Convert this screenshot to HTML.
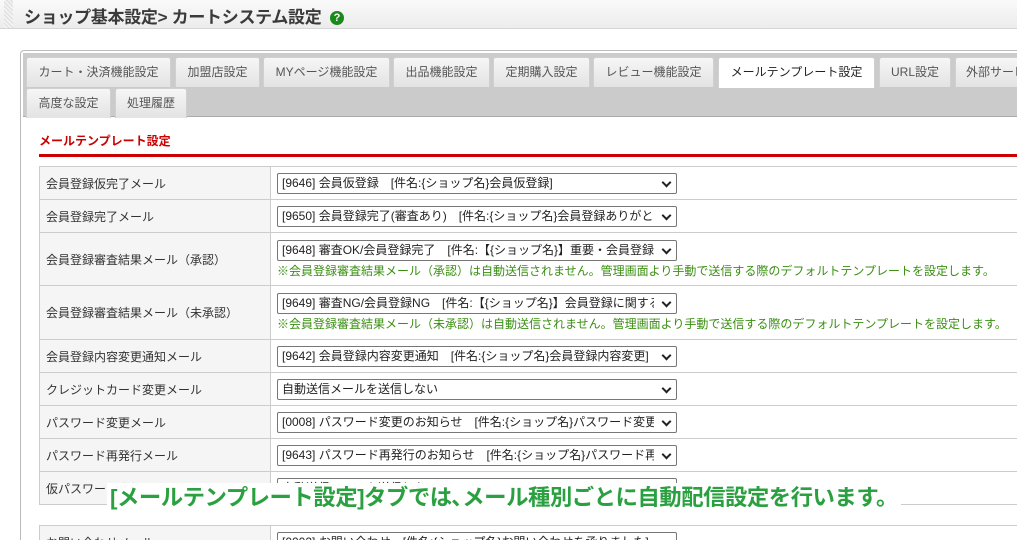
<!DOCTYPE html>
<html style="width:1017px;height:540px;overflow:hidden"><head><meta charset="utf-8"><style>
*{margin:0;padding:0;box-sizing:border-box}
body{width:1017px;height:540px;overflow:hidden;background:#fff;font-family:"Liberation Sans","Noto Sans CJK JP",sans-serif;color:#333}
.wrap{position:relative;width:1017px;height:540px;overflow:hidden}
.hd{position:absolute;left:0;top:0;width:1017px;height:29px;background:linear-gradient(#fafafa,#ececec);border-bottom:1px solid #d6d6d6}
.hatch{position:absolute;left:4px;top:0;width:9px;height:28px;background:repeating-linear-gradient(45deg,#ddd 0 1px,#f2f2f2 1px 3px)}
.ttl{position:absolute;left:24px;top:3px;font-size:17px;font-weight:bold;color:#3a3a3a;letter-spacing:-0.3px}
.q{display:inline-block;width:14px;height:14px;border-radius:50%;background:#1a8a1a;color:#fff;font-size:11px;line-height:14px;text-align:center;vertical-align:2px;margin-left:4px}
.panel{position:absolute;left:20px;top:50px;width:997px;height:490px;border:1px solid #bbb;border-right:none;border-bottom:none;border-radius:4px 0 0 0}
.tabs{position:absolute;left:23px;top:53px;width:994px;height:64px;background:#cbcbcb;border-bottom:1px solid #aaa}
.tab{position:absolute;height:30px;background:linear-gradient(#f6f6f6,#e3e3e3);border:1px solid #d0d0d0;border-bottom:none;border-radius:3px 3px 0 0;font-size:12px;color:#555;text-align:center;line-height:28px;white-space:nowrap;overflow:hidden}
.tab.a{background:#fff;color:#222;height:31px}
h2{position:absolute;left:39px;top:132px;font-size:12px;color:#c00;font-weight:bold}
.rl{position:absolute;left:39px;top:154px;width:978px;height:3px;background:#c00}
table{position:absolute;left:39px;border-collapse:collapse;width:990px;font-size:12px}
td{border:1px solid #ccc;vertical-align:middle}
td.l{width:231px;background:#f5f5f5;padding-left:6px;color:#333}
td.v{padding-left:6px}
.sel{width:400px;height:21px;border:1px solid #777;border-radius:2px;font-size:12px;line-height:19px;padding-left:4px;position:relative;white-space:nowrap;overflow:hidden;color:#222;background:#fff}
.sel:after{content:"";position:absolute;right:6px;top:5px;width:5px;height:5px;border-right:2px solid #222;border-bottom:2px solid #222;transform:rotate(45deg)}
.sel span{display:block;width:372px;overflow:hidden}
.n{color:#3a8f12;font-size:12px;margin-top:1px}
.clip{position:absolute;left:0;top:525px;width:1017px;height:15px;overflow:hidden}
.ov{position:absolute;left:107px;top:483px;font-size:22.4px;font-weight:bold;color:#2aa040;white-space:nowrap;letter-spacing:-0.5px;background:#fff;padding:0 3px;line-height:30px}
</style></head><body><div class="wrap">
<div class="hd"><div class="hatch"></div><div class="ttl">ショップ基本設定&gt; カートシステム設定 <span class="q">?</span></div></div>
<div class="panel"></div>
<div class="tabs"></div>
<div class="tab" style="left:26px;top:57px;width:145px">カート・決済機能設定</div>
<div class="tab" style="left:175px;top:57px;width:85px">加盟店設定</div>
<div class="tab" style="left:263px;top:57px;width:127px">MYページ機能設定</div>
<div class="tab" style="left:393px;top:57px;width:97px">出品機能設定</div>
<div class="tab" style="left:493px;top:57px;width:97px">定期購入設定</div>
<div class="tab" style="left:593px;top:57px;width:121px">レビュー機能設定</div>
<div class="tab a" style="left:718px;top:57px;width:157px">メールテンプレート設定</div>
<div class="tab" style="left:879px;top:57px;width:72px">URL設定</div>
<div class="tab" style="left:955px;top:57px;width:62px;text-align:left;padding-left:10px;border-right:none;border-radius:3px 0 0 0">外部サービス</div>
<div class="tab" style="left:26px;top:88px;width:85px">高度な設定</div>
<div class="tab" style="left:115px;top:88px;width:72px">処理履歴</div>
<h2>メールテンプレート設定</h2>
<div class="rl"></div>
<table style="top:166px">
<tr style="height:33px"><td class="l">会員登録仮完了メール</td><td class="v"><div class="sel"><span>[9646] 会員仮登録　[件名:{ショップ名}会員仮登録]</span></div></td></tr>
<tr style="height:33px"><td class="l">会員登録完了メール</td><td class="v"><div class="sel"><span>[9650] 会員登録完了(審査あり)　[件名:{ショップ名}会員登録ありがとうございます]</span></div></td></tr>
<tr style="height:53px"><td class="l">会員登録審査結果メール（承認）</td><td class="v"><div class="sel"><span>[9648] 審査OK/会員登録完了　[件名:【{ショップ名}】重要・会員登録</span></div><div class="n">※会員登録審査結果メール（承認）は自動送信されません。管理画面より手動で送信する際のデフォルトテンプレートを設定します。</div></td></tr>
<tr style="height:54px"><td class="l">会員登録審査結果メール（未承認）</td><td class="v"><div class="sel"><span>[9649] 審査NG/会員登録NG　[件名:【{ショップ名}】会員登録に関する</span></div><div class="n">※会員登録審査結果メール（未承認）は自動送信されません。管理画面より手動で送信する際のデフォルトテンプレートを設定します。</div></td></tr>
<tr style="height:33px"><td class="l">会員登録内容変更通知メール</td><td class="v"><div class="sel"><span>[9642] 会員登録内容変更通知　[件名:{ショップ名}会員登録内容変更]</span></div></td></tr>
<tr style="height:33px"><td class="l">クレジットカード変更メール</td><td class="v"><div class="sel"><span>自動送信メールを送信しない</span></div></td></tr>
<tr style="height:33px"><td class="l">パスワード変更メール</td><td class="v"><div class="sel"><span>[0008] パスワード変更のお知らせ　[件名:{ショップ名}パスワード変更]</span></div></td></tr>
<tr style="height:33px"><td class="l">パスワード再発行メール</td><td class="v"><div class="sel"><span>[9643] パスワード再発行のお知らせ　[件名:{ショップ名}パスワード再発行]</span></div></td></tr>
<tr style="height:33px"><td class="l">仮パスワード発行メール</td><td class="v"><div class="sel"><span>自動送信メールを送信しない</span></div></td></tr>
</table>
<div class="clip"><table style="top:0">
<tr style="height:40px"><td class="l" style="vertical-align:top;padding-top:8px">お問い合わせメール</td><td class="v" style="vertical-align:top;padding-top:6px"><div class="sel"><span>[0002] お問い合わせ　[件名:{ショップ名}お問い合わせを承りました]</span></div></td></tr>
</table></div>
<div class="ov">[メールテンプレート設定]タブでは､メール種別ごとに自動配信設定を行います。</div>
</div></body></html>
